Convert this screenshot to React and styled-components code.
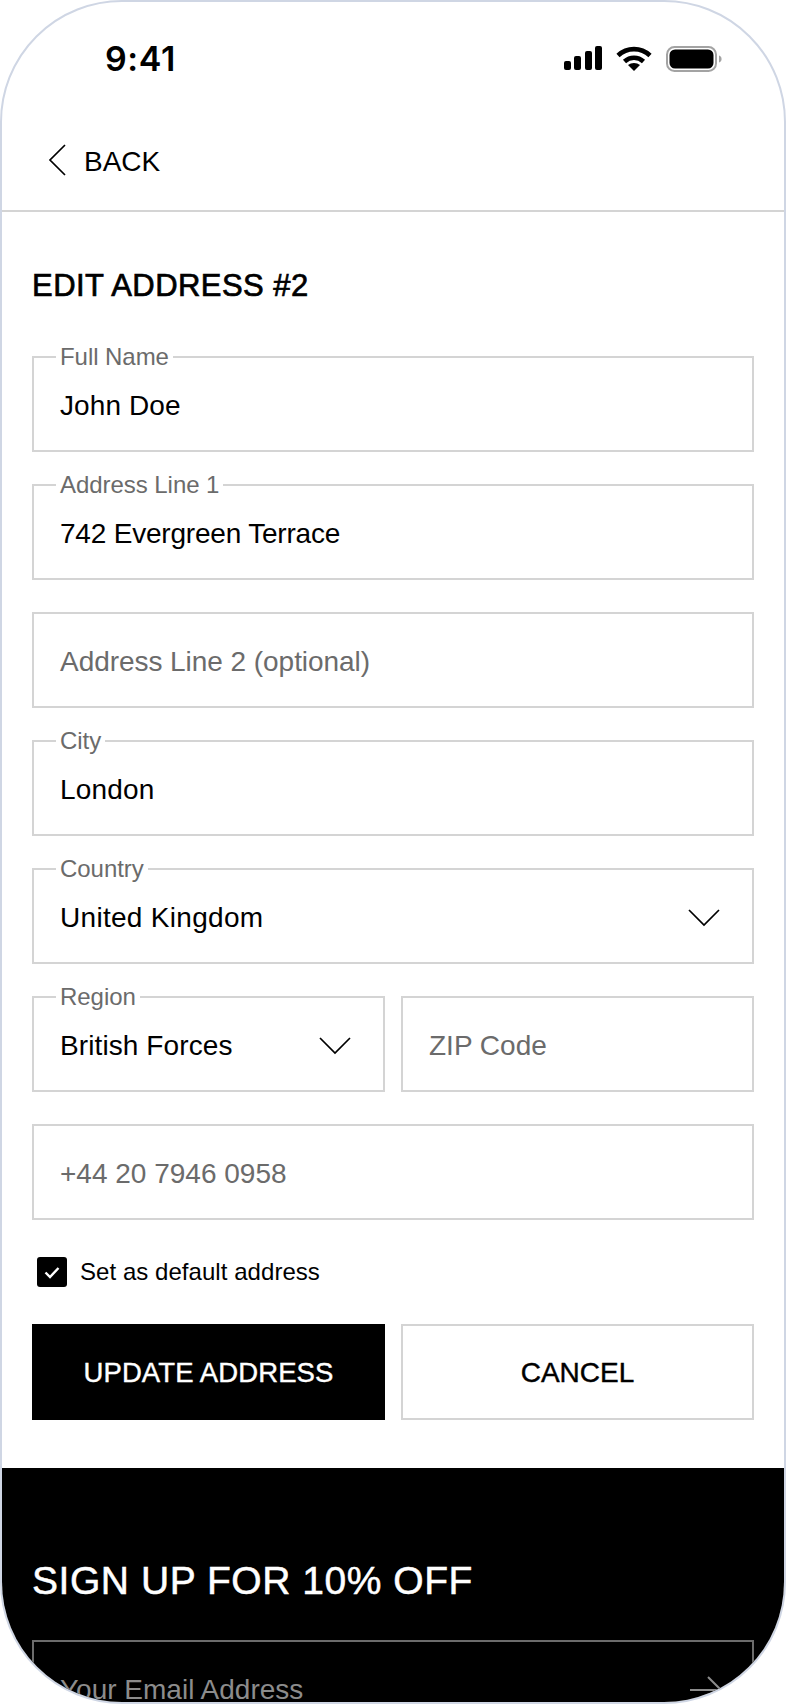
import React from "react";
import styled, { createGlobalStyle } from "styled-components";

const Global = createGlobalStyle`
  html, body { margin: 0; padding: 0; background: #fff; }
  * { box-sizing: border-box; }
`;

const Phone = styled.div`
  width: 786px;
  height: 1704px;
  border: 2px solid #cfd6e4;
  border-radius: 122px;
  overflow: hidden;
  background: #fff;
  color: #000;
  font-family: "Liberation Sans", Arial, sans-serif;
  display: flex;
  flex-direction: column;
`;

const StatusBar = styled.div`
  height: 102px;
  flex: none;
  display: flex;
  justify-content: space-between;
  padding: 35px 62px 0 103px;
`;

const Time = styled.div`
  font-family: Inter, sans-serif;
  font-weight: 600;
  font-size: 34px;
  line-height: 44px;
  letter-spacing: 0.6px;
`;

const StatusIcons = styled.div`
  display: flex;
  align-items: flex-start;
  gap: 14px;
  padding-top: 9px;
`;

const NavBar = styled.div`
  height: 108px;
  flex: none;
  display: flex;
  align-items: center;
  gap: 18px;
  padding: 9px 0 0 46px;
  border-bottom: 2px solid #d4d4d4;
  font-size: 28px;
`;

const BackIcon = styled.svg`
  width: 18px;
  height: 32px;
  margin-top: -4px;
  flex: none;
`;

const Main = styled.main`
  padding: 56px 30px 48px;
  display: flex;
  flex-direction: column;
`;

const Title = styled.h1`
  margin: 0 0 52px;
  font-size: 31px;
  line-height: 36px;
  font-weight: 400;
  letter-spacing: 0.45px;
  -webkit-text-stroke: 0.7px #000;
`;

const Fields = styled.div`
  display: flex;
  flex-direction: column;
  gap: 32px;
`;

const Row = styled.div`
  display: grid;
  grid-template-columns: 1fr 1fr;
  gap: 16px;
`;

const Field = styled.div`
  position: relative;
  height: 96px;
  border: 2px solid #d4d4d4;
  padding: 4px 26px 0;
  display: flex;
  align-items: center;
  justify-content: space-between;
  font-size: 28px;
`;

const Legend = styled.span`
  position: absolute;
  left: 22px;
  top: -14px;
  padding: 0 4px;
  background: #fff;
  color: #6b6b6b;
  font-size: 24px;
  line-height: 26px;
  letter-spacing: -0.05px;
`;

const Value = styled.span`
  color: ${(p) => (p.$placeholder ? "#6b6b6b" : "#000")};
  letter-spacing: ${(p) => p.$track || 0}px;
`;

const Chevron = styled.svg`
  width: 32px;
  height: 18px;
  margin: -1px 6px 0 0;
  flex: none;
`;

const CheckRow = styled.label`
  display: flex;
  align-items: center;
  gap: 13px;
  margin: 37px 0 37px 5px;
  font-size: 24px;
  line-height: 30px;
  letter-spacing: 0.05px;
`;

const CheckBox = styled.span`
  width: 30px;
  height: 30px;
  border-radius: 3px;
  background: #000;
  display: flex;
  align-items: center;
  justify-content: center;
`;

const Actions = styled.div`
  display: grid;
  grid-template-columns: 1fr 1fr;
  gap: 16px;
`;

const Button = styled.button`
  height: 96px;
  padding: 2px 0 0;
  border: 2px solid ${(p) => (p.$primary ? "#000" : "#d4d4d4")};
  border-radius: 0;
  background: ${(p) => (p.$primary ? "#000" : "#fff")};
  color: ${(p) => (p.$primary ? "#fff" : "#000")};
  font-family: inherit;
  font-size: ${(p) => (p.$primary ? "27.5px" : "28px")};
  letter-spacing: ${(p) => (p.$primary ? "0.1px" : "0")};
  -webkit-text-stroke: 0.4px currentColor;
`;

const Signup = styled.section`
  flex: 1;
  background: #000;
  padding: 90px 30px 0;
  color: #fff;
`;

const SignupTitle = styled.h2`
  margin: 0 0 36px;
  font-size: 39px;
  line-height: 46px;
  font-weight: 400;
  letter-spacing: 0.55px;
  -webkit-text-stroke: 0.5px #fff;
`;

const EmailField = styled.div`
  height: 96px;
  border: 2px solid #6b6b6b;
  padding: 4px 30px 0 26px;
  display: flex;
  align-items: center;
  justify-content: space-between;
  color: #8c8c8c;
  font-size: 28px;
`;

const ChevronDown = () => (
  <Chevron viewBox="0 0 32 18" fill="none" stroke="#000" strokeWidth="1.7">
    <path d="M1 1l15 15L31 1" />
  </Chevron>
);

export default function App() {
  return (
    <Phone>
      <Global />
      <StatusBar>
        <Time>9:41</Time>
        <StatusIcons>
          <svg width="38" height="25" viewBox="0 0 38 25" fill="#000">
            <rect x="0" y="15" width="7" height="9" rx="2" />
            <rect x="10" y="10" width="7" height="14" rx="2" />
            <rect x="21" y="5" width="7" height="19" rx="2" />
            <rect x="31" y="0" width="7" height="24" rx="2" />
          </svg>
          <svg width="36" height="25" viewBox="0 0 36 25" fill="none" stroke="#000" strokeWidth="4.6">
            <path d="M2 9.5C11 1 25 1 34 9.5" />
            <path d="M8.5 15.5c5.5-5 13.5-5 19 0" />
            <path d="M18 25l-6-6c3.4-2.8 8.6-2.8 12 0z" fill="#000" stroke="none" />
          </svg>
          <svg width="56" height="26" viewBox="0 0 56 26" fill="none">
            <rect x="1" y="1" width="49" height="24" rx="7.5" stroke="#a3a3a3" strokeWidth="2" />
            <rect x="3.5" y="3.5" width="44" height="19" rx="5.5" fill="#000" />
            <path d="M53 9.5c1.6.5 2.6 1.8 2.6 3.5s-1 3-2.6 3.5z" fill="#a3a3a3" />
          </svg>
        </StatusIcons>
      </StatusBar>

      <NavBar>
        <BackIcon viewBox="0 0 18 32" fill="none" stroke="#000" strokeWidth="1.7">
          <path d="M17 1L2 16l15 15" />
        </BackIcon>
        <span>BACK</span>
      </NavBar>

      <Main>
        <Title>EDIT ADDRESS #2</Title>
        <Fields>
          <Field>
            <Legend>Full Name</Legend>
            <Value $track={0.1}>John Doe</Value>
          </Field>
          <Field>
            <Legend>Address Line 1</Legend>
            <Value $track={-0.2}>742 Evergreen Terrace</Value>
          </Field>
          <Field>
            <Value $placeholder $track={-0.05}>Address Line 2 (optional)</Value>
          </Field>
          <Field>
            <Legend>City</Legend>
            <Value $track={0.2}>London</Value>
          </Field>
          <Field>
            <Legend>Country</Legend>
            <Value $track={0.3}>United Kingdom</Value>
            <ChevronDown />
          </Field>
          <Row>
            <Field>
              <Legend>Region</Legend>
              <Value $track={0.1}>British Forces</Value>
              <ChevronDown />
            </Field>
            <Field>
              <Value $placeholder>ZIP Code</Value>
            </Field>
          </Row>
          <Field>
            <Value $placeholder>+44 20 7946 0958</Value>
          </Field>
        </Fields>

        <CheckRow>
          <CheckBox>
            <svg width="16" height="13" viewBox="0 0 16 13" fill="none" stroke="#fff" strokeWidth="2.4">
              <path d="M1.5 6.5l4.5 4.5L14.500 2" />
            </svg>
          </CheckBox>
          Set as default address
        </CheckRow>

        <Actions>
          <Button $primary>UPDATE ADDRESS</Button>
          <Button>CANCEL</Button>
        </Actions>
      </Main>

      <Signup>
        <SignupTitle>SIGN UP FOR 10% OFF</SignupTitle>
        <EmailField>
          <span>Your Email Address</span>
          <svg width="32" height="28" viewBox="0 0 32 28" fill="none" stroke="#8c8c8c" strokeWidth="2">
            <path d="M0 14h31M18 1l13 13-13 13" />
          </svg>
        </EmailField>
      </Signup>
    </Phone>
  );
}
